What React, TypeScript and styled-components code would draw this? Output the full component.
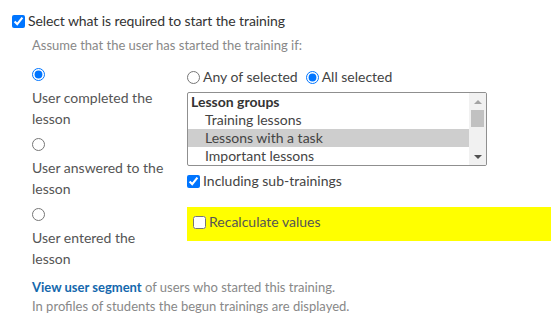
import React from 'react';
import styled, { createGlobalStyle } from 'styled-components';

const GlobalStyle = createGlobalStyle`
  html, body {
    margin: 0;
    padding: 0;
    background: #fff;
  }
  body {
    font-family: Lato, "Liberation Sans", sans-serif;
    color: #333;
  }
`;

const lessons = [
  { title: 'Training lessons', selected: false },
  { title: 'Lessons with a task', selected: true },
  { title: 'Important lessons', selected: false },
];

const conditions = ['User completed the lesson', 'User answered to the lesson', 'User entered the lesson'];

function App() {
  return (
    <StyledPage>
      <GlobalStyle />
      <StyledHeader>
        <StyledCheckbox type="checkbox" defaultChecked />
        <span>Select what is required to start the training</span>
      </StyledHeader>
      <StyledHint>Assume that the user has started the training if:</StyledHint>

      <StyledColumns>
        <StyledConditions>
          {conditions.map((label, i) => (
            <StyledCondition key={label}>
              <StyledRadio type="radio" name="condition" defaultChecked={i === 0} />
              <span>{label}</span>
            </StyledCondition>
          ))}
        </StyledConditions>

        <StyledOptions>
          <StyledRadioRow>
            <StyledInline>
              <StyledRadio type="radio" name="mode" />
              <span>Any of selected</span>
            </StyledInline>
            <StyledInline>
              <StyledRadio type="radio" name="mode" defaultChecked />
              <span>All selected</span>
            </StyledInline>
          </StyledRadioRow>

          <StyledListBox>
            <StyledList>
              <StyledGroupLabel>Lesson groups</StyledGroupLabel>
              {lessons.map((item) => (
                <StyledOption key={item.title} $selected={item.selected}>
                  {item.title}
                </StyledOption>
              ))}
            </StyledList>
            <StyledScrollbar>
              <StyledArrow $dir="up" />
              <StyledTrack>
                <StyledThumb />
              </StyledTrack>
              <StyledArrow $dir="down" />
            </StyledScrollbar>
          </StyledListBox>

          <StyledInline>
            <StyledCheckbox type="checkbox" defaultChecked />
            <span>Including sub-trainings</span>
          </StyledInline>

          <StyledHighlight>
            <StyledInline>
              <StyledCheckbox type="checkbox" />
              <span>Recalculate values</span>
            </StyledInline>
          </StyledHighlight>
        </StyledOptions>
      </StyledColumns>

      <StyledFooter>
        <p>
          <a href="#segment">View user segment</a> of users who started this training.
        </p>
        <p>In profiles of students the begun trainings are displayed.</p>
      </StyledFooter>
    </StyledPage>
  );
}

const StyledPage = styled.div`
  width: 556px;
  height: 328px;
  box-sizing: border-box;
  padding: 11px 0 0 12px;
  overflow: hidden;
`;

const StyledHeader = styled.label`
  display: flex;
  align-items: center;
  gap: 3px;
  font-size: 14px;
  line-height: 20px;
  letter-spacing: -0.1px;
  color: #333;
`;

const StyledCheckbox = styled.input`
  width: 13px;
  height: 13px;
  margin: 0;
  flex: none;
  accent-color: #0075ff;
`;

const StyledRadio = styled.input`
  width: 13px;
  height: 13px;
  margin: 0;
  flex: none;
  accent-color: #0075ff;
`;

const StyledHint = styled.div`
  margin: 5px 0 0 20px;
  font-size: 13px;
  line-height: 18px;
  color: #888;
`;

const StyledColumns = styled.div`
  display: flex;
  margin: 9px 0 0 20px;
`;

const StyledConditions = styled.div`
  display: flex;
  flex-direction: column;
  width: 155px;
  flex: none;
`;

const StyledCondition = styled.label`
  display: flex;
  flex-direction: column;
  align-items: flex-start;
  gap: 6px;
  padding-top: 5px;
  height: 70px;
  box-sizing: border-box;
  font-size: 14px;
  line-height: 21px;
  color: #555;

  > span {
    max-width: 140px;
  }
`;

const StyledOptions = styled.div`
  display: flex;
  flex-direction: column;
  align-items: flex-start;
`;

const StyledRadioRow = styled.div`
  display: flex;
  gap: 8px;
  margin-top: 5px;
`;

const StyledInline = styled.label`
  display: flex;
  align-items: center;
  gap: 3px;
  font-size: 14px;
  line-height: 18px;
  color: #444;
`;

const StyledListBox = styled.div`
  display: flex;
  width: 300px;
  height: 74px;
  box-sizing: border-box;
  margin: 6px 0 6px;
  border: 1px solid #8f8f8f;
  border-radius: 2px;
  overflow: hidden;
`;

const StyledList = styled.div`
  flex: 1;
  display: flex;
  flex-direction: column;
`;

const StyledGroupLabel = styled.div`
  height: 18px;
  padding-left: 3px;
  font-size: 14px;
  line-height: 18px;
  font-weight: 700;
  color: #333;
`;

const StyledOption = styled.div<{ $selected: boolean }>`
  height: 18px;
  padding-left: 17px;
  font-size: 14px;
  line-height: 18px;
  color: #444;
  background: ${({ $selected }) => ($selected ? '#cecece' : 'transparent')};
`;

const StyledScrollbar = styled.div`
  width: 17px;
  flex: none;
  display: flex;
  flex-direction: column;
  background: #f1f1f1;
`;

const StyledArrow = styled.div<{ $dir: 'up' | 'down' }>`
  height: 17px;
  flex: none;
  display: flex;
  align-items: center;
  justify-content: center;

  &::before {
    content: '';
    width: 0;
    height: 0;
    border-left: 4px solid transparent;
    border-right: 4px solid transparent;
    ${({ $dir }) =>
      $dir === 'up' ? 'border-bottom: 4px solid #a3a3a3;' : 'border-top: 4px solid #505050;'}
  }
`;

const StyledTrack = styled.div`
  flex: 1;
  padding: 0 2px;
`;

const StyledThumb = styled.div`
  height: 17px;
  background: #c1c1c1;
`;

const StyledHighlight = styled.div`
  width: 364px;
  height: 34px;
  box-sizing: border-box;
  margin-top: 17px;
  padding: 6px 0 0 6px;
  display: flex;
  align-items: flex-start;
  background: #ffff00;

  ${StyledInline} {
    color: #555;
  }
`;

const StyledFooter = styled.div`
  margin: 5px 0 0 20px;
  font-size: 13px;
  line-height: 19px;
  color: #888;

  p {
    margin: 0;
  }

  a {
    color: #1468ad;
    font-weight: 700;
    text-decoration: none;
  }
`;

export default App;
